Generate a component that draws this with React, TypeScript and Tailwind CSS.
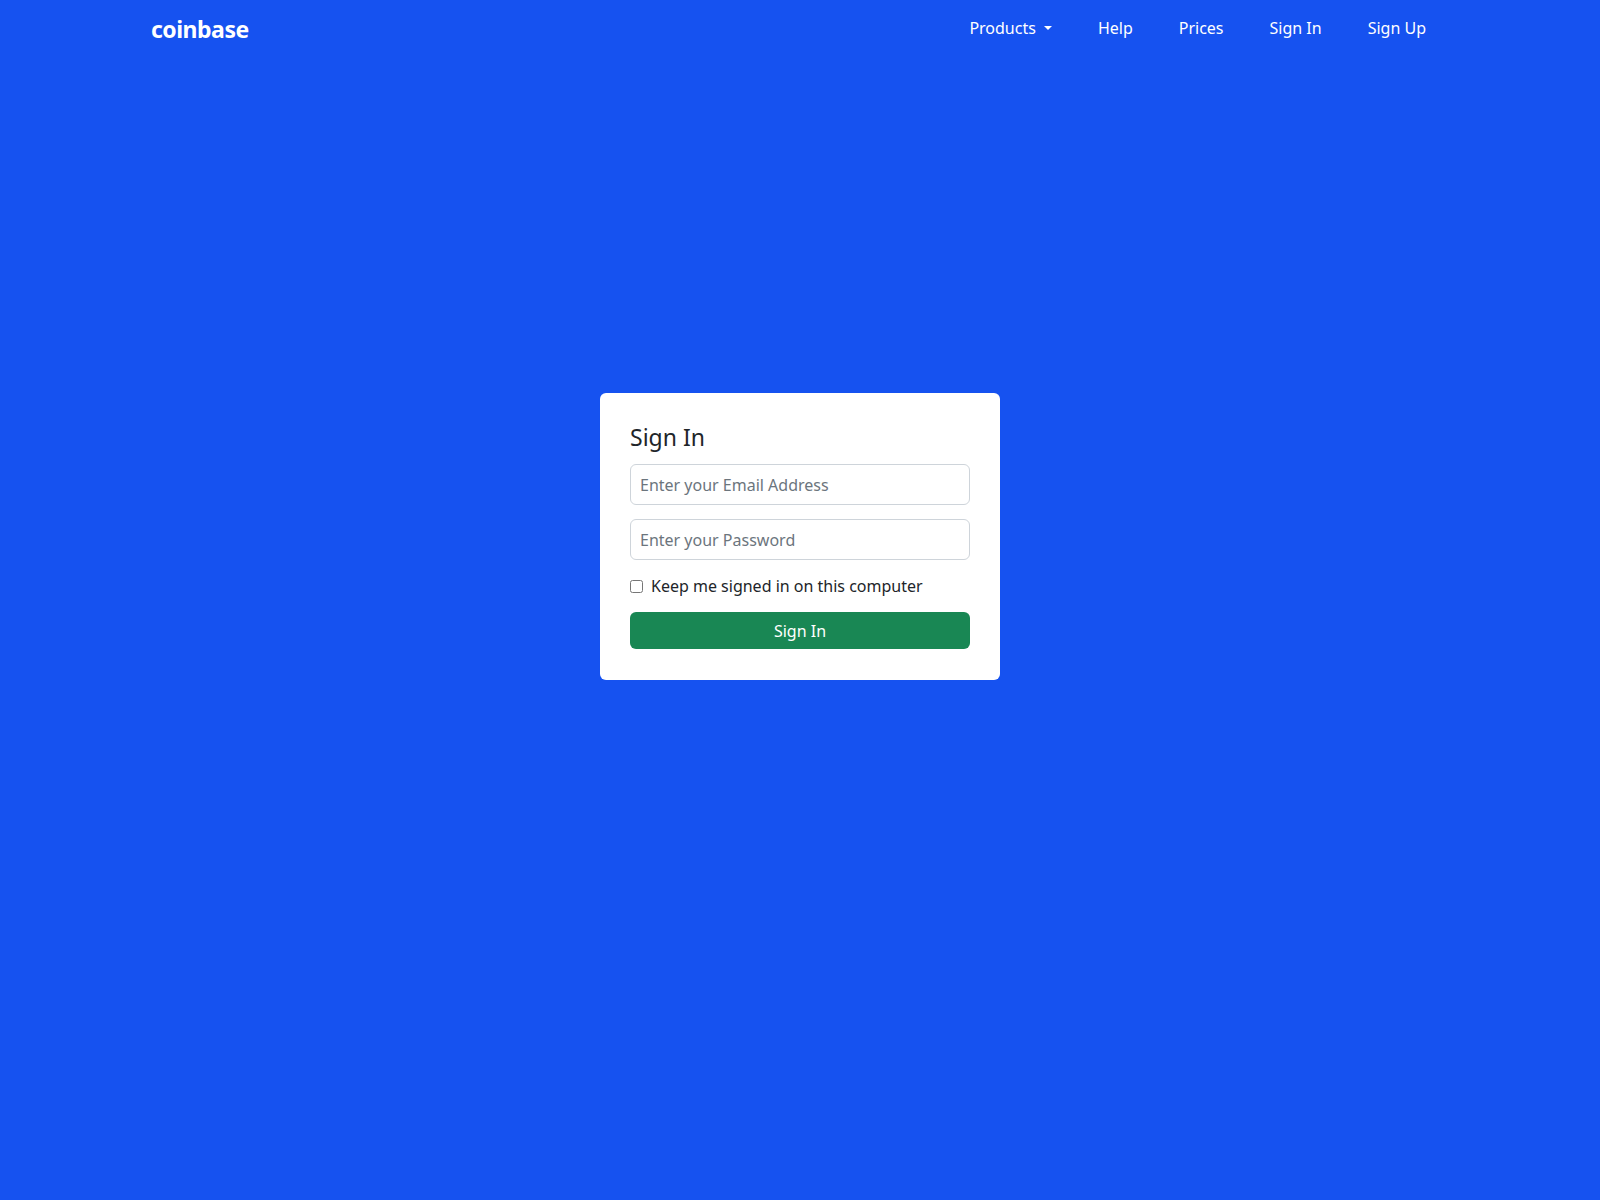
import React from "react";

export default function App() {
  return (
    <div className="min-h-screen w-full bg-[#1652f0] font-['Noto_Sans',sans-serif]">
      <nav className="h-[56px] flex items-center justify-between px-[151px]">
        <span className="text-white text-[23px] font-bold tracking-[-0.5px] font-['Inter',sans-serif] pt-[2px]">
          coinbase
        </span>
        <div className="flex items-center gap-[46px] text-white text-[16px] pr-[23px]">
          <span className="flex items-center gap-[8px]">
            Products
            <span className="inline-block w-0 h-0 border-l-[4px] border-r-[4px] border-t-[4px] border-l-transparent border-r-transparent border-t-white"></span>
          </span>
          <span>Help</span>
          <span>Prices</span>
          <span>Sign In</span>
          <span>Sign Up</span>
        </div>
      </nav>
      <div className="flex justify-center mt-[337px]">
        <div className="w-[400px] bg-white rounded-[6px] p-[30px] pb-[31px]">
          <h4 className="text-[23px] leading-[29px] text-[#212529] mb-[12px]">Sign In</h4>
          <input
            className="block w-full h-[41px] border border-[#ced4da] rounded-[6px] px-[9px] text-[16px] placeholder:text-[#6c757d] outline-none"
            placeholder="Enter your Email Address"
          />
          <input
            type="password"
            className="block w-full h-[41px] mt-[14px] border border-[#ced4da] rounded-[6px] px-[9px] text-[16px] placeholder:text-[#6c757d] outline-none"
            placeholder="Enter your Password"
          />
          <label className="flex items-center gap-[8px] mt-[14px] text-[16px] text-[#212529]">
            <input type="checkbox" className="w-[13px] h-[13px]" />
            Keep me signed in on this computer
          </label>
          <button className="w-full h-[37px] mt-[14px] bg-[#198754] text-white text-[16px] rounded-[6px]">
            Sign In
          </button>
        </div>
      </div>
    </div>
  );
}
